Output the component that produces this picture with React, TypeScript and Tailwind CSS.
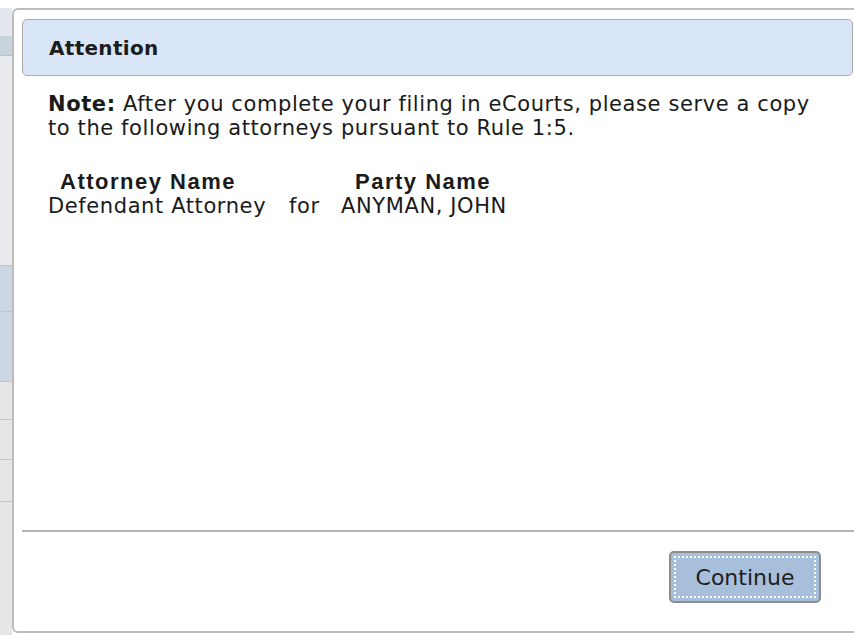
const attorneys = [{ attorney: 'Defendant Attorney', party: 'ANYMAN, JOHN' }];

function PageEdge() {
  // sliver of the page that sits behind the dialog
  return (
    <div className="w-[12px] shrink-0 flex flex-col bg-[#e6e6e6]">
      <div className="h-[8px] bg-white" />
      <div className="h-[28px] bg-[#e4e8ee]" />
      <div className="h-[20px] bg-[#c9d3de] border-b border-[#b9c2cc]" />
      <div className="h-[210px] bg-[#e8eaed] border-b border-[#c4c4c4]" />
      <div className="h-[46px] bg-[#ccd6e2] border-b border-[#bcc5ce]" />
      <div className="h-[70px] bg-[#cdd7e3] border-b border-[#c4c4c4]" />
      <div className="h-[38px] border-b border-[#c4c4c4]" />
      <div className="h-[40px] border-b border-[#c4c4c4]" />
      <div className="h-[42px] border-b border-[#c4c4c4]" />
      <div className="flex-1" />
    </div>
  );
}

export default function App() {
  return (
    <div className="w-[854px] h-[635px] overflow-hidden bg-white flex font-['DejaVu_Sans',sans-serif] text-[#1a1a1a]">
      <PageEdge />
      <div className="mt-[8px] mb-[2px] flex-1 flex flex-col bg-white border-l-2 border-t-2 border-b-2 border-[#bcbcbc] rounded-tl-[6px] rounded-bl-[6px] pl-[8px] pt-[9px]">
        <div className="h-[57px] mr-[1px] flex items-center px-[26px] bg-[#d8e6f8] border border-[#a9a9a9] rounded-[5px]">
          <span className="text-[20px] font-bold tracking-[0.3px] text-[#1c1c1c]">Attention</span>
        </div>

        <div className="flex-1 pl-[26px] pr-[30px] pt-[16px] text-[21px] tracking-[0.6px]">
          <p className="leading-[24px]">
            <span className="font-bold">Note:</span> After you complete your filing in eCourts, please serve a copy to the following attorneys pursuant to Rule 1:5.
          </p>

          <div className="mt-[30px] grid grid-cols-[241px_52px_auto] leading-[24px]">
            <div className="pl-[12px] font-['Liberation_Sans',sans-serif] font-bold text-[22px] tracking-[1.5px]">
              Attorney Name
            </div>
            <div />
            <div className="pl-[14px] font-['Liberation_Sans',sans-serif] font-bold text-[22px] tracking-[1.5px]">
              Party Name
            </div>
            {attorneys.map((a) => (
              <div key={a.party} className="contents">
                <div>{a.attorney}</div>
                <div>for</div>
                <div>{a.party}</div>
              </div>
            ))}
          </div>
        </div>

        <div className="h-[101px] border-t-2 border-[#b4b4b4] flex items-start justify-end pt-[19px] pr-[33px]">
          <button className="w-[152px] h-[52px] rounded-[5px] border-2 border-[#8c8c8c] bg-[#a7bfdb] p-[3px]">
            <span className="w-full h-full flex items-center justify-center border-2 border-dotted border-white text-[22px] text-[#202020]">
              Continue
            </span>
          </button>
        </div>
      </div>
    </div>
  );
}
